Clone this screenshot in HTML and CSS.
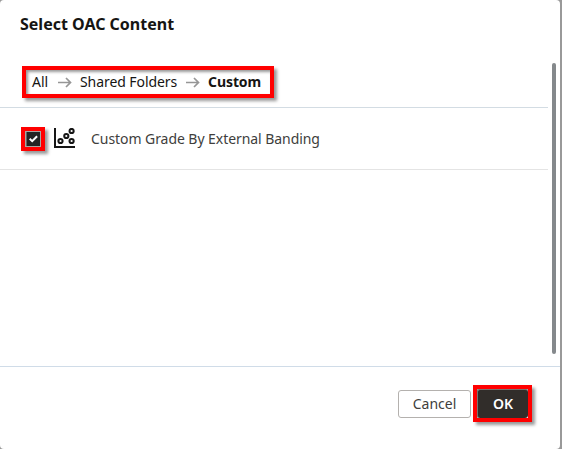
FILE: index.html
```html
<!DOCTYPE html>
<html lang="en">
<head>
<meta charset="utf-8">
<title>Select OAC Content</title>
<link rel="stylesheet" href="styles.css">
</head>
<body>
<main class="dialog">
  <header class="title"><h1>Select OAC Content</h1></header>
  <section class="content">
    <div class="list">
      <nav class="crumbs">
        <div class="trail marked">
          <span class="crumb t-all">All</span>
          <svg class="arrow" width="14" height="12" viewBox="0 0 14 12"><path d="M0 6.5h12.5M8 2L12.5 6.5 8 11"/></svg>
          <span class="crumb t-shared">Shared Folders</span>
          <svg class="arrow" width="14" height="12" viewBox="0 0 14 12"><path d="M0 6.5h12.5M8 2L12.5 6.5 8 11"/></svg>
          <span class="crumb current">Custom</span>
        </div>
      </nav>
      <div class="row">
        <div class="check marked">
          <svg width="16" height="16" viewBox="0 0 16 16"><rect width="16" height="16" fill="#aaa6a2"/><rect x="1.5" y="1" width="13.5" height="14" fill="#242424"/><path d="M4.7 7.8l2.5 2.4 4.9-5" fill="none" stroke="#fff" stroke-width="2"/></svg>
        </div>
        <svg class="chart" width="21" height="21" viewBox="0 0 21 21"><path d="M1 0v19h20"/><circle cx="6.5" cy="13" r="2.1"/><circle cx="12.3" cy="8" r="2.1"/><circle cx="17.6" cy="3" r="2.1"/><circle cx="17.6" cy="13" r="2.1"/></svg>
        <span class="name">Custom Grade By External Banding</span>
      </div>
    </div>
    <div class="scroll"><div class="thumb"></div></div>
  </section>
  <footer class="actions">
    <button class="cancel">Cancel</button>
    <div class="confirm marked"><button class="ok">OK</button></div>
  </footer>
</main>
</body>
</html>
```
FILE: styles.css
```css
* { box-sizing: border-box; }
body {
  margin: 0;
  background: #999;
  font: 14px/20px "Noto Sans", sans-serif;
  color: #161513;
}
.dialog {
  width: 560px;
  height: 449px;
  display: grid;
  grid-template-rows: 57px 309px 83px;
  background: #fff;
  border-radius: 4px;
}
.title { padding: 14px 20px; }
.title h1 { margin: 0; font-size: 16px; line-height: 20px; font-weight: 700; white-space: nowrap; }
.content { display: flex; }
.list { width: 548px; }
.marked {
  border: 4px solid #f00;
  box-shadow: 3px 3px 3px rgba(0, 0, 0, .4), inset 2px 2px 3px rgba(0, 0, 0, .4);
}
.crumbs { height: 51px; padding: 9px 22px; border-bottom: 1px solid #d3dce3; }
.trail {
  width: 252px;
  height: 32px;
  padding: 0 0 0 6px;
  display: flex;
  align-items: center;
  white-space: nowrap;
}
.crumb { line-height: 20px; }
.t-all { width: 26px; }
.t-shared { width: 106px; letter-spacing: -.07px; }
.arrow { margin-right: 8px; fill: none; stroke: #969696; stroke-width: 1.7; flex: none; }
.current { font-weight: 700; letter-spacing: -.08px; }
.row {
  height: 62px;
  padding-left: 21px;
  display: flex;
  align-items: center;
  border-bottom: 1px solid #e4e4e4;
}
.check { width: 24px; height: 24px; display: flex; }
.check svg { display: block; }
.chart { margin: 0 16px 0 9px; fill: none; stroke: #161616; stroke-width: 2; }
.name { color: #403e3c; white-space: nowrap; letter-spacing: -.06px; }
.scroll { padding: 6px 0 0 4px; }
.thumb { width: 4px; height: 291px; border-radius: 2px; background: #85898c; }
.actions {
  display: flex;
  align-items: flex-start;
  padding: 18px 28px 0 0;
  justify-content: flex-end;
  gap: 2px;
  border-top: 1px solid #d0dce8;
}
button { font: 14px/20px "Noto Sans", sans-serif; padding: 0; }
.cancel {
  width: 73px;
  height: 28px;
  margin-top: 5px;
  border: 1px solid #b4b1ae;
  border-radius: 3px;
  background: #fff;
  color: #403e3c;
}
.confirm { width: 59px; height: 37px; display: flex; }
.ok {
  width: 51px;
  height: 29px;
  border: 1px solid #777370;
  border-width: 1px 0 0 1px;
  border-radius: 3px;
  background: #312d2a;
  color: #fff;
  font-weight: 600;
}
```
